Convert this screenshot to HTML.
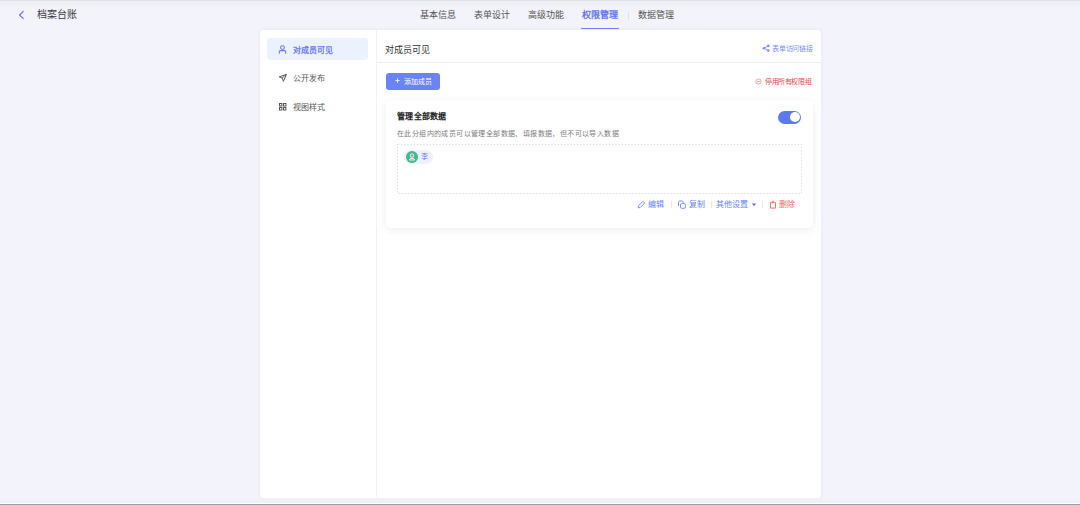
<!DOCTYPE html>
<html lang="zh-CN"><head><meta charset="utf-8">
<style>
*{box-sizing:border-box;margin:0;padding:0}
html,body{width:1080px;height:505px;overflow:hidden}
body{background:#f2f3fb;font-family:"Liberation Sans",sans-serif;position:relative;color:#333}
.a{position:absolute;white-space:nowrap;line-height:1}
svg{position:absolute;overflow:visible}
</style></head><body>
<!-- top chrome lines -->
<div class="a" style="left:0;top:0;width:1080px;height:1px;background:#e2e3e8"></div>
<div class="a" style="left:0;top:1px;width:1080px;height:5px;background:#eff0f5"></div>

<!-- header -->
<svg style="left:18px;top:10px" width="7" height="10" viewBox="0 0 7 10"><path d="M5.2 1.5 L1.5 5 L5.2 8.5" fill="none" stroke="#7080f0" stroke-width="1.2" stroke-linecap="round" stroke-linejoin="round"/></svg>
<div class="a" style="left:37px;top:10px;font-size:10px;color:#3a3a42">档案台账</div>

<div class="a" style="left:420px;top:11px;font-size:9px;color:#555">基本信息</div>
<div class="a" style="left:474px;top:11px;font-size:9px;color:#555">表单设计</div>
<div class="a" style="left:528px;top:11px;font-size:9px;color:#555">高级功能</div>
<div class="a" style="left:582px;top:11px;font-size:9px;color:#6678f0;font-weight:bold">权限管理</div>
<div class="a" style="left:627.5px;top:12px;width:1px;height:8px;background:#e2e3ea"></div>
<div class="a" style="left:638px;top:11px;font-size:9px;color:#555">数据管理</div>
<div class="a" style="left:581px;top:27.6px;width:38px;height:1.2px;background:#7484f0;border-radius:1px"></div>

<!-- main card -->
<div class="a" style="left:0;top:499.5px;width:1080px;height:3.5px;background:#f0f0f5"></div>
<div class="a" style="left:258.5px;top:29px;width:563px;height:469.5px;background:#fff;border-radius:4px;border:1px solid #eeeef4;box-shadow:0 0 3px rgba(30,30,80,0.04)"></div>
<div class="a" style="left:376px;top:30px;width:1px;height:467px;background:#f2f2f6"></div>

<!-- sidebar -->
<div class="a" style="left:267px;top:38px;width:101px;height:22px;background:#ebf2fe;border-radius:3px"></div>
<svg style="left:278px;top:45px" width="9" height="9" viewBox="0 0 9 9"><circle cx="4.5" cy="2.6" r="1.9" fill="none" stroke="#6b7cf0" stroke-width="1.1"/><path d="M1.3 8.3 V6.6 Q1.3 5.6 2.3 5.6 H6.7 Q7.7 5.6 7.7 6.6 V8.3" fill="none" stroke="#6b7cf0" stroke-width="1.1" stroke-linecap="round"/></svg>
<div class="a" style="left:293px;top:46.6px;font-size:8px;color:#6b7cf0;font-weight:bold">对成员可见</div>

<svg style="left:278px;top:73px" width="10" height="10" viewBox="0 0 10 10"><path d="M8.4 1.4 L1.2 3.9 L4.1 5 L5.4 8.3 Z M8.4 1.4 L4.1 5" fill="none" stroke="#4a4a4a" stroke-width="0.9" stroke-linejoin="round"/></svg>
<div class="a" style="left:293px;top:75px;font-size:8px;color:#555">公开发布</div>

<svg style="left:279px;top:103px" width="8" height="8" viewBox="0 0 8 8"><path fill="#555" fill-rule="evenodd" d="M0 0H3.4V3.4H0Z M1 1V2.4H2.4V1Z M4 0H7.4V3.4H4Z M5 1V2.4H6.4V1Z M0 4H3.4V7.4H0Z M1 5V6.4H2.4V5Z M4 4H7.4V7.4H4Z M5 5V6.4H6.4V5Z"/></svg>
<div class="a" style="left:293px;top:104px;font-size:8px;color:#555">视图样式</div>

<!-- panel header -->
<div class="a" style="left:385px;top:45.6px;font-size:9px;color:#333">对成员可见</div>
<svg style="left:762px;top:44px" width="9" height="9" viewBox="0 0 9 9"><circle cx="6.3" cy="1.9" r="1.3" fill="#7b8ef5"/><circle cx="1.9" cy="4.2" r="1.3" fill="#7b8ef5"/><circle cx="6.3" cy="6.6" r="1.3" fill="#7b8ef5"/><path d="M6.3 1.9 L1.9 4.2 L6.3 6.6" fill="none" stroke="#7b8ef5" stroke-width="0.9"/></svg>
<div class="a" style="left:772px;top:45px;font-size:7px;letter-spacing:-0.2px;color:#7d90f6">表单访问链接</div>
<div class="a" style="left:377px;top:62px;width:444px;height:1px;background:#efeff2"></div>

<!-- add button -->
<div class="a" style="left:386px;top:72.5px;width:54px;height:17.5px;background:#6a83f5;border-radius:3px"></div>
<svg style="left:394px;top:77px" width="7" height="7" viewBox="0 0 7 7"><path d="M3.5 1.4 V5.8 M1.3 3.6 H5.7" stroke="#fff" stroke-width="0.85"/></svg>
<div class="a" style="left:404px;top:78px;font-size:7px;color:#fff">添加成员</div>

<!-- disable all -->
<svg style="left:755px;top:77.5px" width="7" height="7" viewBox="0 0 7 7"><circle cx="3.5" cy="3.5" r="2.6" fill="none" stroke="#e67a7a" stroke-width="0.7"/><path d="M2.2 3.5 H4.8" stroke="#e67a7a" stroke-width="0.7"/></svg>
<div class="a" style="left:765px;top:78px;font-size:7px;letter-spacing:-0.4px;color:#dc4a50">停用所有权限组</div>

<!-- inner card -->
<div class="a" style="left:386px;top:100px;width:426.5px;height:127.5px;background:#fff;border-radius:5px;box-shadow:0 2px 9px rgba(20,20,60,0.075)"></div>
<div class="a" style="left:397px;top:113px;font-size:8px;letter-spacing:0.3px;color:#222;font-weight:bold">管理全部数据</div>
<div class="a" style="left:777.5px;top:111px;width:23.5px;height:12.5px;background:#5b7af0;border-radius:7px"></div>
<div class="a" style="left:790px;top:112.2px;width:10px;height:10px;background:#fff;border-radius:50%"></div>
<div class="a" style="left:397px;top:130px;font-size:7px;letter-spacing:0.4px;color:#7c7c80">在此分组内的成员可以管理全部数据、填报数据，但不可以导入数据</div>

<svg style="left:397px;top:144px" width="405" height="50" viewBox="0 0 405 50"><rect x="0.5" y="0.5" width="404" height="49" fill="none" stroke="#e0e0e4" stroke-width="1" stroke-dasharray="1.6 1.6"/></svg>
<div class="a" style="left:403.5px;top:149.6px;width:29.5px;height:14.2px;background:#f0f0fc;border-radius:7px"></div>
<div class="a" style="left:406px;top:151.2px;width:12px;height:12px;background:#3cba92;border-radius:50%"></div>
<svg style="left:406px;top:151.2px" width="12" height="12" viewBox="0 0 12 12"><circle cx="6" cy="4.6" r="1.7" fill="none" stroke="#fff" stroke-width="0.9"/><path d="M3.4 9 Q3.4 7.3 6 7.3 Q8.6 7.3 8.6 9 Z" fill="none" stroke="#fff" stroke-width="0.9"/></svg>
<div class="a" style="left:420.5px;top:153px;font-size:7px;color:#6b84f5">李</div>

<!-- actions -->
<svg style="left:637px;top:199.5px" width="9" height="9" viewBox="0 0 9 9"><path d="M1.2 7.8 L1.5 5.8 L6 1.3 L7.7 3 L3.2 7.5 Z" fill="none" stroke="#6b84f5" stroke-width="0.9" stroke-linejoin="round"/></svg>
<div class="a" style="left:648px;top:201px;font-size:8px;color:#6b84f5">编辑</div>
<div class="a" style="left:671px;top:201px;width:1px;height:7px;background:#e8e8ee"></div>
<svg style="left:677px;top:199.5px" width="10" height="10" viewBox="0 0 10 10"><g fill="none" stroke="#6f86f5" stroke-width="0.9"><path d="M1.5 6.2 V2.3 Q1.5 1 2.8 1 H4.9 Q6.2 1 6.2 2.3 V3.3"/><rect x="3.5" y="3.6" width="4.9" height="4.7" rx="1.1"/></g></svg>
<div class="a" style="left:689px;top:201px;font-size:8px;color:#6b84f5">复制</div>
<div class="a" style="left:711px;top:201px;width:1px;height:7px;background:#e8e8ee"></div>
<div class="a" style="left:716px;top:201px;font-size:8px;color:#6b84f5">其他设置</div>
<svg style="left:751px;top:202.5px" width="6" height="4" viewBox="0 0 6 4"><path d="M0.8 0.5 H5.2 L3 3.3 Z" fill="#5b72ee"/></svg>
<div class="a" style="left:762px;top:201px;width:1px;height:7px;background:#e8e8ee"></div>
<svg style="left:769px;top:199.5px" width="9" height="10" viewBox="0 0 9 10"><g fill="none" stroke="#f26b6b" stroke-width="0.95" stroke-linejoin="round"><path d="M1.5 2.7 H6.5 V8.1 H1.5 Z"/><path d="M3 2.7 L3.3 1.3 H4.7 L5 2.7"/></g></svg>
<div class="a" style="left:779px;top:201px;font-size:8px;color:#f06767">删除</div>

<!-- bottom chrome -->
<div class="a" style="left:0;top:503px;width:1080px;height:1px;background:#fff"></div>
<div class="a" style="left:0;top:504px;width:1080px;height:1px;background:#9e9ea6"></div>
</body></html>
